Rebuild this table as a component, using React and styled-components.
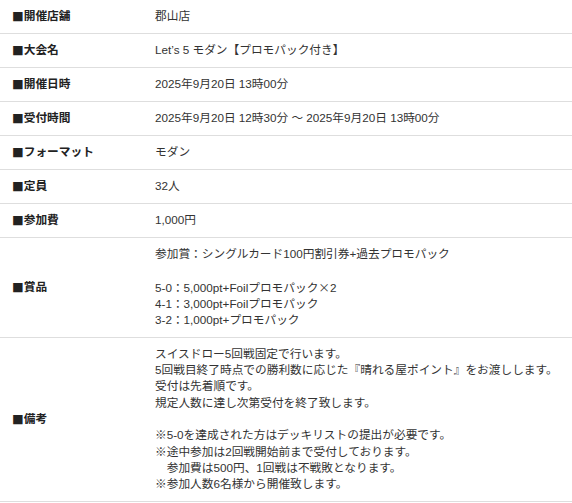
import styled, { createGlobalStyle } from 'styled-components'

const GlobalStyle = createGlobalStyle`
  html, body {
    margin: 0;
    padding: 0;
    background: #fff;
  }
  body {
    font-family: "Liberation Sans", "Noto Sans CJK JP", sans-serif;
    font-size: 11.7px;
    color: #333;
  }
`

const Cjk = styled.span`
  font-family: "Noto Sans CJK JP", sans-serif;
`

const rows = [
  { label: '開催店舗', value: ['郡山店'] },
  { label: '大会名', value: ['Let\u2019s 5 モダン【プロモパック付き】'] },
  { label: '開催日時', value: ['2025年9月20日 13時00分'] },
  { label: '受付時間', value: ['2025年9月20日 12時30分 〜 2025年9月20日 13時00分'] },
  { label: 'フォーマット', value: ['モダン'] },
  { label: '定員', value: ['32人'] },
  { label: '参加費', value: ['1,000円'] },
  {
    label: '賞品',
    value: [
      '参加賞：シングルカード100円割引券+過去プロモパック',
      '',
      <>5-0：5,000pt+Foilプロモパック<Cjk>×</Cjk>2</>,
      '4-1：3,000pt+Foilプロモパック',
      '3-2：1,000pt+プロモパック',
    ],
  },
  {
    label: '備考',
    value: [
      'スイスドロー5回戦固定で行います。',
      '5回戦目終了時点での勝利数に応じた『晴れる屋ポイント』をお渡しします。',
      '受付は先着順です。',
      '規定人数に達し次第受付を終了致します。',
      '',
      '※5-0を達成された方はデッキリストの提出が必要です。',
      '※途中参加は2回戦開始前まで受付しております。',
      '　参加費は500円、1回戦は不戦敗となります。',
      '※参加人数6名様から開催致します。',
    ],
  },
]

function App() {
  return (
    <>
      <GlobalStyle />
      <InfoTable>
        {rows.map((row) => (
          <Row key={row.label}>
            <Label>
              <Cjk>■</Cjk>
              {row.label}
            </Label>
            <Value>
              {row.value.map((line, i) => (
                <Line key={i}>{line || '\u00a0'}</Line>
              ))}
            </Value>
          </Row>
        ))}
      </InfoTable>
    </>
  )
}

const InfoTable = styled.dl`
  margin: 0;
  width: 572px;
`

const Row = styled.div`
  display: grid;
  grid-template-columns: 143px 1fr;
  border-bottom: 1px solid #dedede;
`

const Cell = styled.div`
  box-sizing: border-box;
  min-height: 33px;
  padding: 8px 12px;
  line-height: 16.35px;
`

const Label = styled(Cell).attrs({ as: 'dt' })`
  display: flex;
  align-items: center;
  font-weight: bold;
  color: #222;
`

const Value = styled(Cell).attrs({ as: 'dd' })`
  margin: 0;
  display: flex;
  flex-direction: column;
  justify-content: center;
`

const Line = styled.span`
  display: block;
  white-space: pre;
`

export default App
